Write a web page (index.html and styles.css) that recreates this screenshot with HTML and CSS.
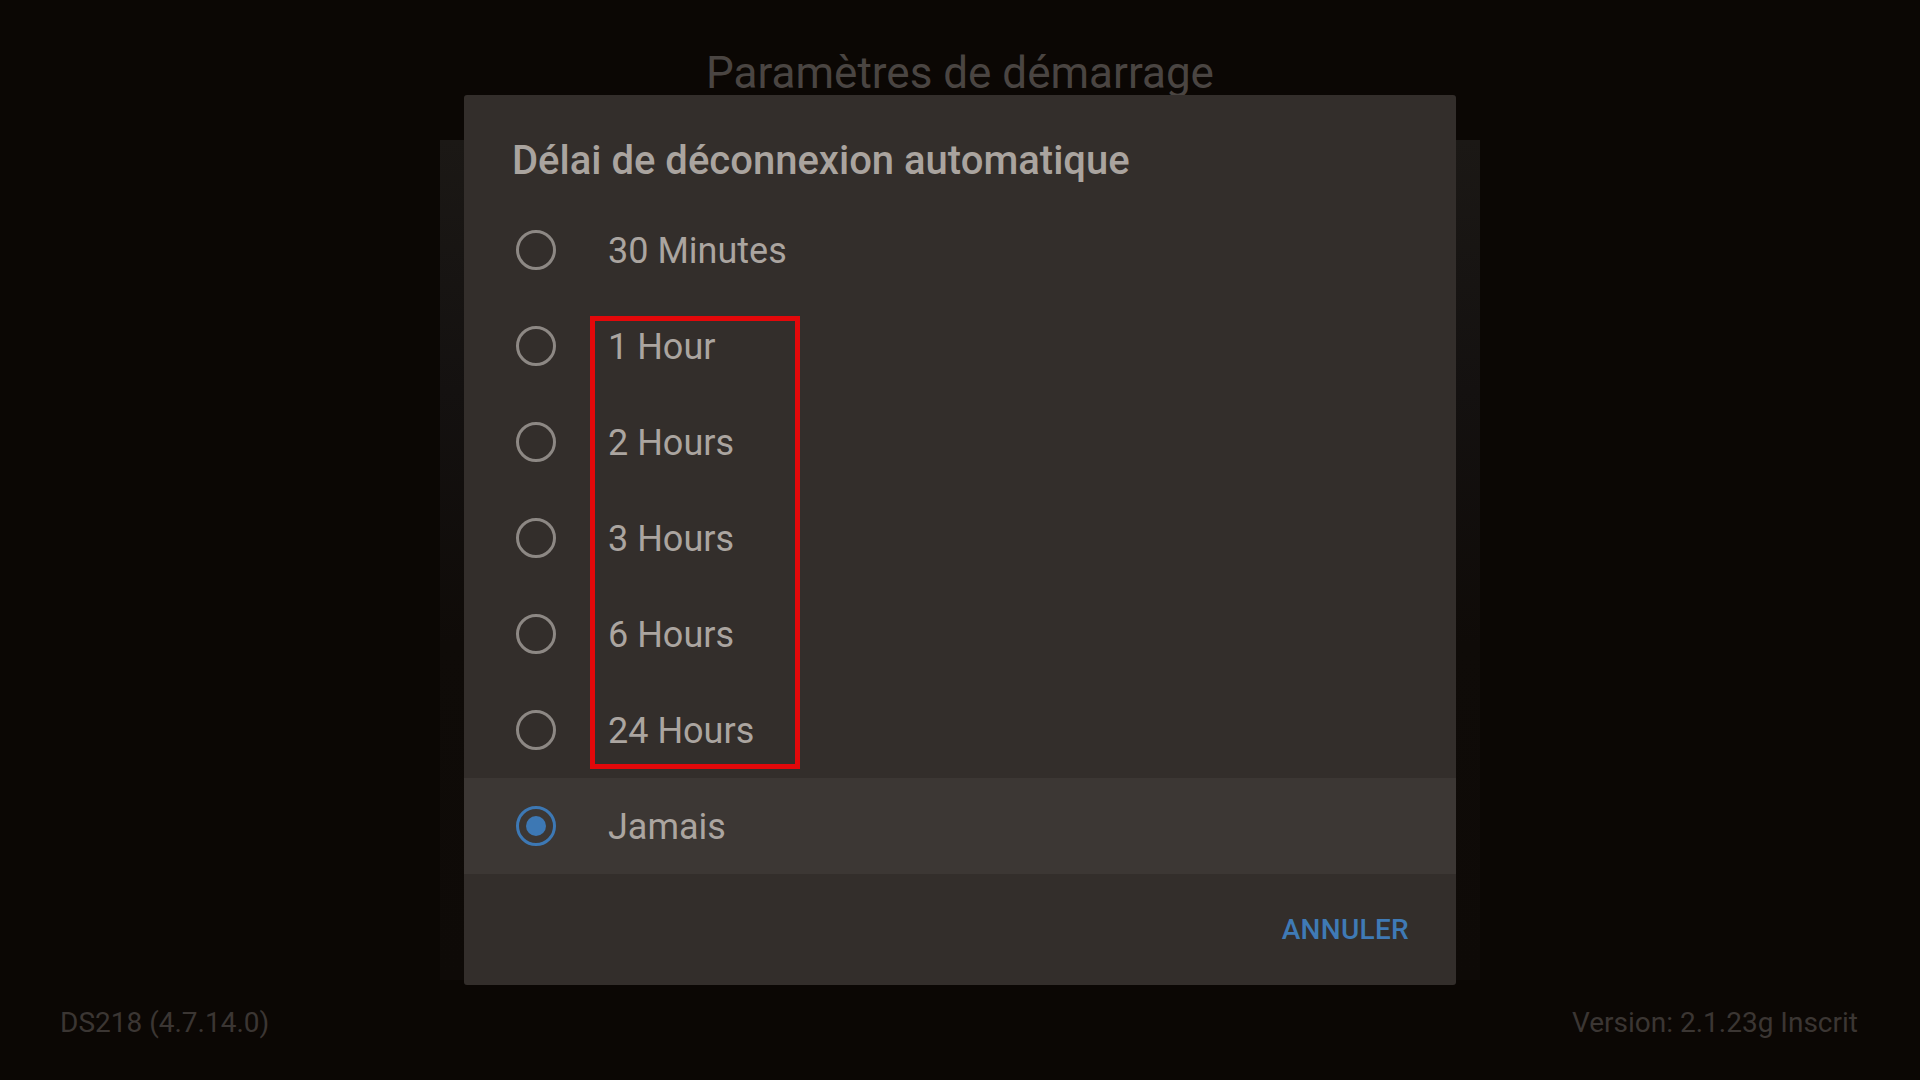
FILE: index.html
```html
<!DOCTYPE html>
<html lang="fr">
<head>
<meta charset="utf-8">
<title>Paramètres de démarrage</title>
<link rel="stylesheet" href="styles.css">
</head>
<body>
<div class="screen">
  <header class="page-title">Paramètres de démarrage</header>
  <div class="panel"></div>
  <footer class="status">
    <span>DS218 (4.7.14.0)</span>
    <span>Version: 2.1.23g Inscrit</span>
  </footer>

  <div class="dialog">
    <h2 class="dialog-title">Délai de déconnexion automatique</h2>
    <ul class="options">
      <li class="option"><span class="radio"></span><span class="label">30 Minutes</span></li>
      <li class="option"><span class="radio"></span><span class="label">1 Hour</span></li>
      <li class="option"><span class="radio"></span><span class="label">2 Hours</span></li>
      <li class="option"><span class="radio"></span><span class="label">3 Hours</span></li>
      <li class="option"><span class="radio"></span><span class="label">6 Hours</span></li>
      <li class="option"><span class="radio"></span><span class="label">24 Hours</span></li>
      <li class="option selected"><span class="radio checked"></span><span class="label">Jamais</span></li>
    </ul>
    <div class="actions"><span class="btn">ANNULER</span></div>
  </div>

  <div class="highlight-box"></div>
</div>
</body>
</html>
```
FILE: styles.css
```css
* { box-sizing: border-box; }
html, body { margin: 0; padding: 0; }
body {
  background: #0b0704;
  font-family: Roboto, "Noto Sans", "Liberation Sans", sans-serif;
  overflow: hidden;
}
.screen {
  width: 1920px;
  height: 1080px;
  position: relative;
  display: flex;
  flex-direction: column;
}
.page-title {
  height: 140px;
  display: flex;
  align-items: center;
  justify-content: center;
  padding-top: 5px;
  font-size: 44px;
  color: #4a4542;
  font-weight: 400;
}
.panel {
  width: 1040px;
  height: 840px;
  margin: 0 auto;
  background: linear-gradient(to bottom, #1b1815 0%, #141110 30%, #0f0b08 60%, #0e0a07 100%);
}
.status {
  flex: 1;
  display: flex;
  justify-content: space-between;
  align-items: center;
  padding: 0 62px 16px 60px;
  font-size: 28px;
  color: #3b3633;
}
.dialog {
  position: absolute;
  left: 464px;
  top: 95px;
  width: 992px;
  height: 890px;
  background: #332e2b;
  border-radius: 3px;
  display: flex;
  flex-direction: column;
}
.dialog-title {
  margin: 0;
  padding: 46px 48px 22px 48px;
  height: 107px;
  font-size: 40px;
  line-height: 40px;
  font-weight: 500;
  color: #aaa49f;
}
.options {
  list-style: none;
  margin: 0;
  padding: 0;
}
.option {
  height: 96px;
  display: flex;
  align-items: center;
  padding-left: 52px;
  gap: 52px;
}
.option.selected { background: #3c3734; }
.radio {
  width: 40px;
  height: 40px;
  border-radius: 50%;
  border: 3.5px solid #8d8884;
  display: flex;
  align-items: center;
  justify-content: center;
  flex: none;
}
.radio.checked { border-color: #3d78b4; }
.radio.checked::after {
  content: "";
  width: 20px;
  height: 20px;
  border-radius: 50%;
  background: #3d78b4;
}
.label {
  font-size: 36px;
  color: #aba5a0;
  line-height: 40px;
  padding-top: 1px;
}
.actions {
  flex: 1;
  display: flex;
  align-items: center;
  justify-content: flex-end;
  padding-right: 47px;
}
.btn {
  font-size: 28px;
  font-weight: 500;
  color: #3f7ab5;
  letter-spacing: 0.3px;
}
.highlight-box {
  position: absolute;
  left: 590px;
  top: 316px;
  width: 210px;
  height: 453px;
  border: 5px solid #e3080a;
}
```
